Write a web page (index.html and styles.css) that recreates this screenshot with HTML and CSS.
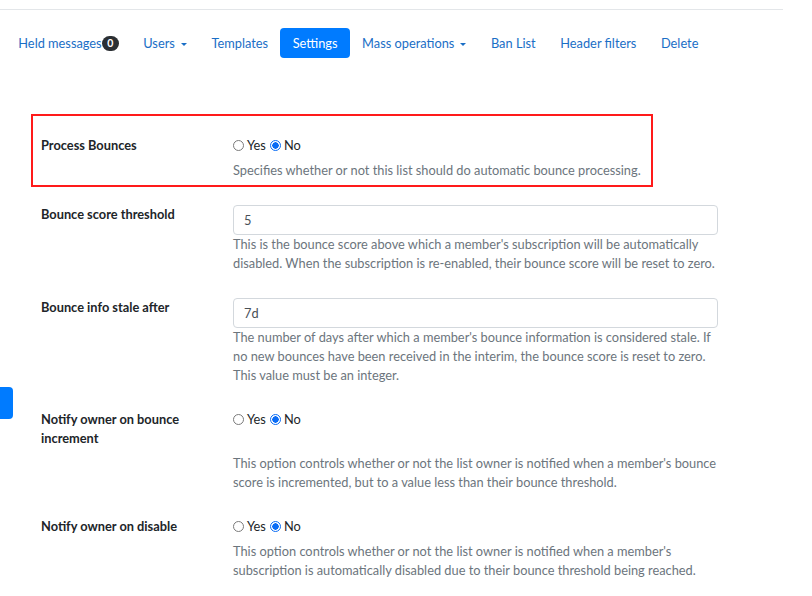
FILE: index.html
```html
<!DOCTYPE html>
<html lang="en">
<head>
<meta charset="utf-8">
<title>Settings</title>
<link rel="stylesheet" href="styles.css">
</head>
<body>
<div class="page">
  <div class="topline"></div>
  <ul class="nav">
    <li><a class="nav-link" href="#">Held messages<span class="badge">0</span></a></li>
    <li><a class="nav-link" href="#">Users<span class="caret"></span></a></li>
    <li><a class="nav-link" href="#">Templates</a></li>
    <li><a class="nav-link active" href="#">Settings</a></li>
    <li><a class="nav-link" href="#">Mass operations<span class="caret"></span></a></li>
    <li><a class="nav-link" href="#">Ban List</a></li>
    <li><a class="nav-link" href="#">Header filters</a></li>
    <li><a class="nav-link" href="#">Delete</a></li>
  </ul>

  <form class="form">
    <div class="row">
      <label class="label">Process Bounces</label>
      <div class="control radios">
        <label class="radio"><input type="radio" name="pb"> Yes</label>
        <label class="radio"><input type="radio" name="pb" checked> No</label>
      </div>
      <div class="help">Specifies whether or not this list should do automatic bounce processing.</div>
    </div>

    <div class="row">
      <label class="label">Bounce score threshold</label>
      <div class="control"><input class="text-input" type="text" value="5"></div>
      <div class="help">This is the bounce score above which a member's subscription will be automatically disabled. When the subscription is re-enabled, their bounce score will be reset to zero.</div>
    </div>

    <div class="row">
      <label class="label">Bounce info stale after</label>
      <div class="control"><input class="text-input" type="text" value="7d"></div>
      <div class="help">The number of days after which a member's bounce information is considered stale. If no new bounces have been received in the interim, the bounce score is reset to zero. This value must be an integer.</div>
    </div>

    <div class="row">
      <label class="label">Notify owner on bounce increment</label>
      <div class="control radios">
        <label class="radio"><input type="radio" name="ni"> Yes</label>
        <label class="radio"><input type="radio" name="ni" checked> No</label>
      </div>
      <div class="help">This option controls whether or not the list owner is notified when a member's bounce score is incremented, but to a value less than their bounce threshold.</div>
    </div>

    <div class="row">
      <label class="label">Notify owner on disable</label>
      <div class="control radios">
        <label class="radio"><input type="radio" name="nd"> Yes</label>
        <label class="radio"><input type="radio" name="nd" checked> No</label>
      </div>
      <div class="help">This option controls whether or not the list owner is notified when a member's subscription is automatically disabled due to their bounce threshold being reached.</div>
    </div>
  </form>

  <div class="highlight"></div>
</div>
<div class="side-tab"></div>
</body>
</html>
```
FILE: styles.css
```css
* { box-sizing: border-box; }
html, body { margin: 0; padding: 0; background: #fff; }
body {
  font-family: Lato, "Liberation Sans", sans-serif;
  font-size: 12.8px;
  line-height: 19px;
  color: #212529;
  overflow: hidden;
}
.page { position: relative; width: 812px; height: 596px; }

.topline { width: 783px; height: 10px; border-bottom: 1px solid #e3e6e9; }

.nav {
  list-style: none;
  margin: 18px 0 0 6px;
  padding: 0;
  display: flex;
}
.nav-link {
  display: flex;
  align-items: center;
  height: 30px;
  padding: 0 12.3px;
  color: #1a6ec6;
  text-decoration: none;
  border-radius: 4px;
}
.nav-link.active { background: #007bff; color: #fff; }
.badge {
  display: inline-flex;
  align-items: center;
  justify-content: center;
  width: 17px;
  height: 15px;
  border-radius: 8px;
  background: #2b2f33;
  color: #fff;
  font-weight: bold;
  font-size: 10.5px;
  margin-top: 1px;
}
.caret {
  display: inline-block;
  margin-left: 6px;
  margin-top: 2px;
  width: 0; height: 0;
  border-left: 3px solid transparent;
  border-right: 3px solid transparent;
  border-top: 3.5px solid currentColor;
}

.form { margin: 78px 0 0 41px; }
.row {
  display: grid;
  grid-template-columns: 192px 485px;
  margin-bottom: 25px;
}
.label {
  grid-column: 1; grid-row: 1;
  font-weight: bold;
  width: 160px;
  padding-bottom: 6px;
}
.control { grid-column: 2; grid-row: 1; }
.help { grid-column: 2; grid-row: 2; color: #6c757d; }

.radios { display: flex; align-items: center; height: 19px; }
.radio { display: inline-flex; align-items: center; margin-right: 4px; }
.radio input {
  appearance: none;
  -webkit-appearance: none;
  width: 11px; height: 11px;
  margin: 0 3px 0 0;
  border: 1px solid #7a7a7a;
  border-radius: 50%;
  background: #fff;
}
.radio input:checked {
  border: 1px solid #0a6cf5;
  background: radial-gradient(circle, #0a6cf5 0 3px, #fff 3.4px);
}

.text-input {
  display: block;
  width: 485px;
  height: 30px;
  padding: 0 10px;
  border: 1px solid #d3d8dd;
  border-radius: 4px;
  font-family: inherit;
  font-size: 12.8px;
  color: #495057;
  background: #fff;
}

.highlight {
  position: absolute;
  left: 31px; top: 114px;
  width: 622px; height: 73px;
  border: 2.5px solid #ff1a1a;
  pointer-events: none;
}

.side-tab {
  position: fixed;
  left: 0; top: 387px;
  width: 13px; height: 32px;
  background: #007bff;
  border-radius: 0 4px 4px 0;
}
```
